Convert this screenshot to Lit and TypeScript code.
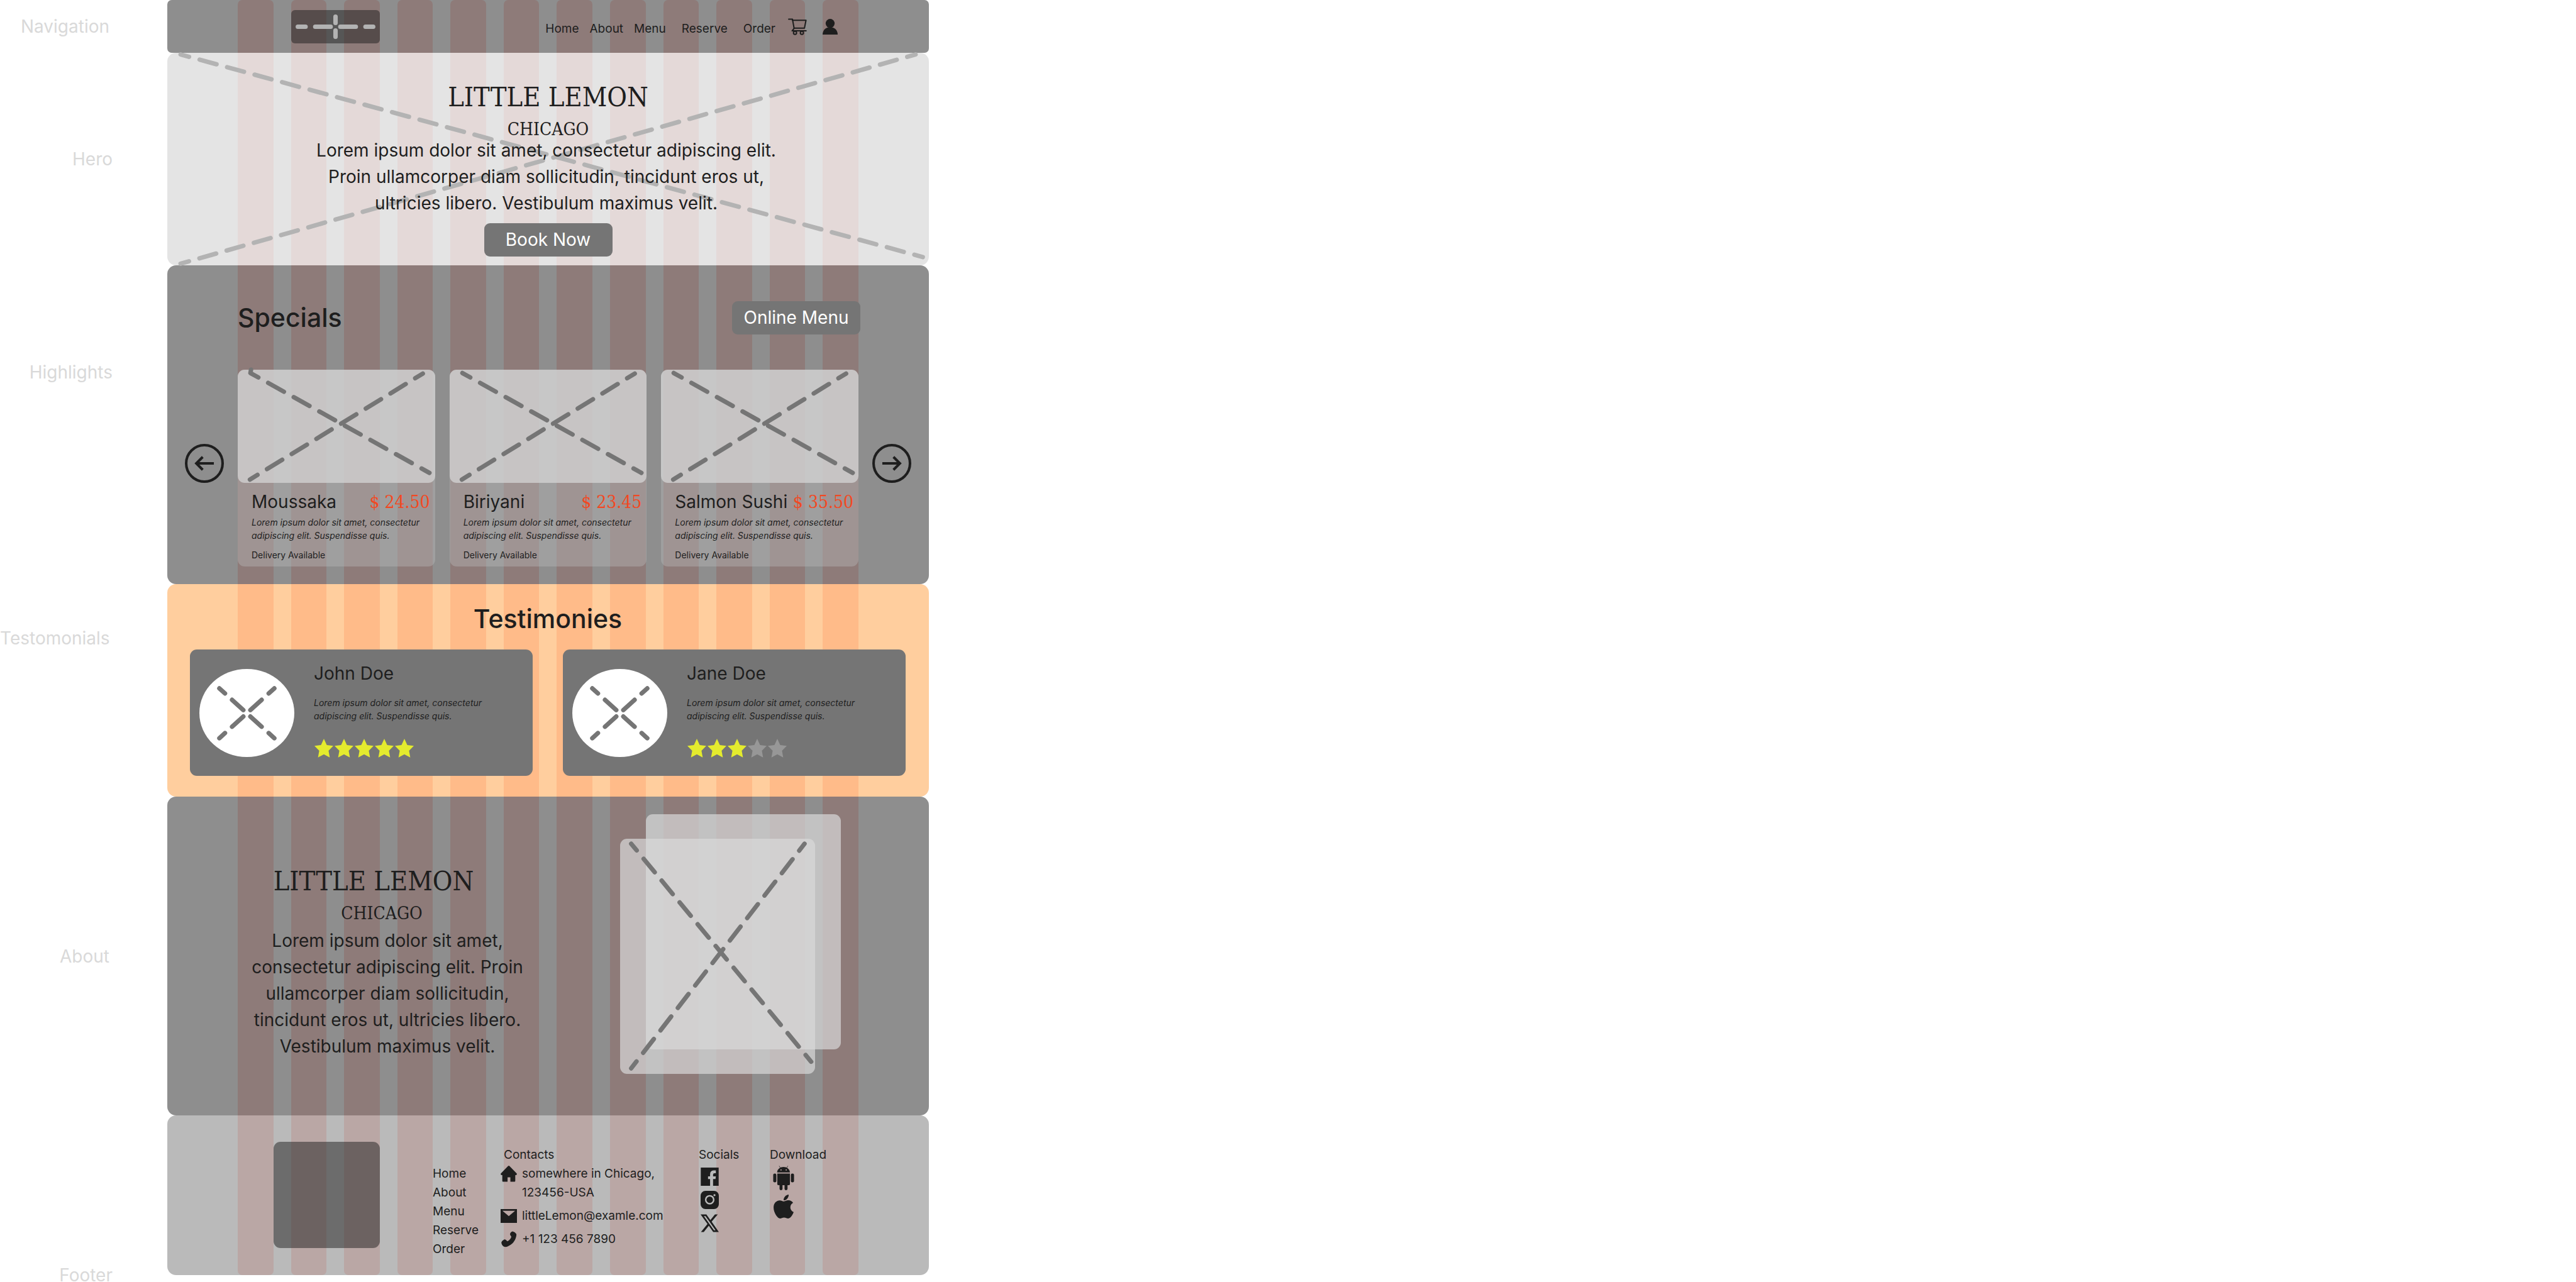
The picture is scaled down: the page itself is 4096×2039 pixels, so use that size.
import { LitElement, html, css, svg } from "lit";
import { customElement, property } from "lit/decorators.js";

type Line = [x1: number, y1: number, x2: number, y2: number, periods: number];

/* A placeholder stroke: dashes spread evenly, with half a dash at each end. */
const dashed = ([x1, y1, x2, y2, periods]: Line) => {
  const period = Math.hypot(x2 - x1, y2 - y1) / periods;
  const dash = (period * 8) / 13;
  return svg`<line x1=${x1} y1=${y1} x2=${x2} y2=${y2}
    stroke-dasharray="${dash} ${period - dash}" stroke-dashoffset=${dash / 2}></line>`;
};

@customElement("dashed-cross")
export class DashedCross extends LitElement {
  @property({ type: Number }) w = 100;
  @property({ type: Number }) h = 100;
  @property({ attribute: false }) lines: Line[] = [];

  static styles = css`
    :host { display: block; }
    .cross {
      display: block; width: 100%; height: 100%; overflow: visible;
      fill: none; stroke: currentColor; stroke-width: 8; stroke-linecap: round;
    }
  `;

  render() {
    return html`<svg class="cross" viewBox="0 0 ${this.w} ${this.h}" preserveAspectRatio="none" aria-hidden="true">
      ${this.lines.map(dashed)}
    </svg>`;
  }
}

const LOGO_LINES: Line[] = [[12, 30, 148, 30, 3], [80, 12, 80, 48, 1]];
const HERO_LINES: Line[] = [[24, 3, 1365, 369, 27], [24, 381, 1352, 3, 27]];
const DISH_LINES: Line[] = [[23, 6, 346, 186, 7], [22, 198, 334, 7, 7]];
const FIRST_DISH_LINES: Line[] = [...DISH_LINES, [24, 0, 23, 5, 0.5]];
const FACE_LINES: Line[] = [[36, 35, 135, 125, 3], [36, 125, 135, 35, 3]];
const ABOUT_LINES: Line[] = [[20, 9, 345, 403, 10], [20, 415, 333, 9, 10]];

const PAGES = ["Home", "About", "Menu", "Reserve", "Order"];
const BLURB = "Lorem ipsum dolor sit amet, consectetur adipiscing elit. Suspendisse quis.";
const STORY =
  "Lorem ipsum dolor sit amet, consectetur adipiscing elit. Proin ullamcorper diam sollicitudin, tincidunt eros ut, ultricies libero. Vestibulum maximus velit.";

const DISHES = [
  { name: "Moussaka", price: "$ 24.50" },
  { name: "Biriyani", price: "$ 23.45" },
  { name: "Salmon Sushi", price: "$ 35.50" },
];

const REVIEWS = [
  { name: "John Doe", stars: 5 },
  { name: "Jane Doe", stars: 3 },
];

const cartIcon = html`<svg class="icon cart" viewBox="0 0 34 30" aria-hidden="true">
  <g fill="none" stroke="currentColor" stroke-width="2.3" stroke-linecap="round" stroke-linejoin="round">
    <path d="M1.2 1.4H8L11 18L7.4 22.4H32.6"></path>
    <path d="M8 3.4H32.4L29.6 17.6H11"></path>
    <circle cx="12.6" cy="26" r="2.8"></circle>
    <circle cx="25" cy="26" r="2.8"></circle>
  </g>
</svg>`;

const userIcon = html`<svg class="icon user" viewBox="0 0 27 28" aria-hidden="true">
  <circle cx="13.5" cy="8" r="8"></circle>
  <path d="M0 28C0 20 6 14.5 13.5 14.5S27 20 27 28Z"></path>
</svg>`;

const arrowIcon = (dir: "left" | "right") => html`<svg class="arrow" viewBox="0 0 70 70" aria-hidden="true">
  <g fill="none" stroke="currentColor" stroke-width="4.6">
    <circle cx="35" cy="35" r="32.7"></circle>
    ${dir === "left"
      ? svg`<path d="M52 35H21M32 23.5L20.5 35L32 46.5"></path>`
      : svg`<path d="M18 35H49M38 23.5L49.5 35L38 46.5"></path>`}
  </g>
</svg>`;

const starIcon = (on: boolean) => html`<svg class="star ${on ? "on" : ""}" viewBox="0 0 34 34" aria-hidden="true">
  <path d="M17 0L22.2 11.2L34 12.8L25.4 21.4L27.6 33.6L17 28L6.4 33.6L8.6 21.4L0 12.8L11.8 11.2Z"></path>
</svg>`;

const homeIcon = html`<svg class="icon line-icon" viewBox="0 0 87 87" aria-hidden="true">
  <path d="M40 1.500Q43.500-1 47 1.500L86 42Q88 50 80 50H78V81Q78 85 74 85H52V62H37V85H13Q9 85 9 81V50H7Q-1 50 1 42Z"></path>
</svg>`;

const mailIcon = html`<svg class="icon line-icon" viewBox="0 -7 87 87" aria-hidden="true">
  <path fill-rule="evenodd" d="M0 0H87V73H0ZM10 9L43.500 37L77 9Z"></path>
</svg>`;

const phoneIcon = html`<svg class="icon line-icon" viewBox="-3 -2 87 87" aria-hidden="true">
  <path d="M61 0Q54 1 49 8Q45 15 49 21L54 27Q52 42 33 52L25 45Q18 40 12 46Q4 50 1 58Q2 72 13 80Q24 85 36 79Q60 70 73 46Q82 27 81 14Q74 3 61 0Z"></path>
</svg>`;

const facebookIcon = html`<svg class="icon social" viewBox="0 0 96 98" aria-hidden="true">
  <path fill-rule="evenodd" d="M0 0H96V98H66V62H79L81 47H66V38Q66 30 74 30H81V15H69Q50 16 50 36V47H39V62H50V98H0Z"></path>
</svg>`;

const instagramIcon = html`<svg class="icon social" viewBox="0 0 96 96" aria-hidden="true">
  <path fill-rule="evenodd" d="M26 0H70A26 26 0 0 1 96 26V70A26 26 0 0 1 70 96H26A26 26 0 0 1 0 70V26A26 26 0 0 1 26 0ZM48 22A25 25 0 1 0 48 72A25 25 0 1 0 48 22ZM73 17A5.500 5.500 0 1 0 73 28A5.500 5.500 0 1 0 73 17Z"></path>
  <circle cx="48" cy="47" r="17"></circle>
</svg>`;

const xIcon = html`<svg class="icon social" viewBox="0 0 24 24" aria-hidden="true">
  <path d="M18.901 0.500h3.680l-8.040 9.500L24 23.500h-7.406l-5.800-8.200-6.638 8.200H.474l8.600-10.500L0 .500h7.594l5.243 7.400ZM17.610 21.300h2.039L6.486 2.600H4.298Z"></path>
</svg>`;

const androidIcon = html`<svg class="icon android" viewBox="0 0 112 132" aria-hidden="true">
  <path d="M32 1L39 13M79 1L72 13" fill="none" stroke="currentColor" stroke-width="2.500"></path>
  <path fill-rule="evenodd" d="M21 36C23 17 38 7 55.500 7S88 17 90 36ZM42 19.500A3.500 3.500 0 1 0 42 26.500A3.500 3.500 0 1 0 42 19.500ZM70 19.500A3.500 3.500 0 1 0 70 26.500A3.500 3.500 0 1 0 70 19.500Z"></path>
  <path d="M22 42H90V99Q90 105 84 105H28Q22 105 22 99Z"></path>
  <rect x="0" y="42" width="17" height="48" rx="8"></rect>
  <rect x="95" y="42" width="17" height="48" rx="8"></rect>
  <rect x="34" y="92" width="16" height="40" rx="8"></rect>
  <rect x="61" y="92" width="16" height="40" rx="8"></rect>
</svg>`;

const appleIcon = html`<svg class="icon apple" viewBox="4 32 376 448" aria-hidden="true">
  <path d="M318.7 268.7c-.2-36.7 16.4-64.4 50-84.8-18.8-26.9-47.2-41.7-84.7-44.6-35.5-2.8-74.3 20.7-88.5 20.7-15 0-49.4-19.7-76.4-19.7C63.3 141.2 4 184.800 4 273.500q0 39.300 14.400 81.200c12.800 36.700 59 126.700 107.200 125.200 25.200-.6 43-17.900 75.800-17.900 31.800 0 48.300 17.900 76.400 17.900 48.600-.7 90.400-82.500 102.600-119.300-65.200-30.700-61.700-90-61.700-91.900zm-56.600-164.200c27.300-32.400 24.800-61.900 24-72.500-24.100 1.400-52 16.400-67.900 34.900-17.500 19.800-27.800 44.300-25.600 71.900 26.100 2 49.900-11.400 69.500-34.300z"></path>
</svg>`;

@customElement("app-root")
export class AppRoot extends LitElement {
  static styles = css`
    :host {
      display: block;
      font-family: Inter, "Liberation Sans", sans-serif;
      font-size: 28px;
      line-height: 42px;
      color: #1e1e1e;
      background: #fff;
    }
    * { box-sizing: border-box; }
    h1, h2, h3, p, ul { margin: 0; padding: 0; font-size: inherit; font-weight: 400; }
    ul { list-style: none; }
    a { color: inherit; text-decoration: none; }
    button { font: inherit; color: inherit; border: 0; padding: 0; background: none; cursor: pointer; }

    .page {
      position: relative;
      display: grid;
      grid-template-columns: 266px minmax(0, 1211px);
      grid-template-rows: 84px 338px 507px 338px 507px 254px;
      padding-bottom: 11px;
      overflow: hidden;
      isolation: isolate;
    }

    .label { grid-column: 1; color: #d9d9d9; line-height: 34px; text-align: right; padding-right: 87px; }
    .label.near { padding-right: 92px; }
    .label.middle { align-self: center; }
    .label.upper { padding-top: 69px; }
    .label.third { padding-top: 153px; }
    .label.foot { align-self: end; line-height: 22px; margin-bottom: -11px; }

    /* The column guides lie under every band of the page. */
    .stripes {
      position: absolute;
      inset: 0;
      grid-column: 2 / 3;
      grid-row: 1 / 7;
      z-index: -1;
      display: grid;
      grid-template-columns: repeat(12, 1fr);
      gap: 28px;
      padding: 0 112px;
    }
    .stripe { background: #ffd9d5; border-radius: 7px; }

    .band { grid-column: 2; border-radius: 14px; }
    .band.nav, .band.specials, .band.about { background: rgba(30, 30, 30, 0.5); }
    .band.nav { border-radius: 7px; }
    .band.hero { background: rgba(217, 217, 217, 0.7); }
    .band.reviews { background: rgba(255, 158, 62, 0.5); }
    .band.footer { background: rgba(117, 117, 117, 0.5); }

    .icon { display: block; fill: currentColor; }

    .nav { display: flex; align-items: center; justify-content: space-between; padding: 0 145px 0 197px; }
    .logo { width: 141px; height: 53px; border-radius: 6px; background: rgba(30, 30, 30, 0.5); color: #b3b3b3; }
    .logo dashed-cross { width: 100%; height: 100%; }
    .tools { display: flex; align-items: center; }
    .pages { display: flex; gap: 17px; padding: 8px 20px 0 0; font-size: 19px; line-height: 30px; }
    .pages .wide { padding-left: 8px; }
    .cart { width: 30px; height: 27px; }
    .user { width: 24px; height: 25px; }
    .icon-button { display: block; margin-left: 25px; }
    .icon-button.first { margin-left: 0; }

    .hero { position: relative; }
    .hero-cross { position: absolute; inset: 0; color: #b3b3b3; }
    .hero-text { position: relative; display: flex; flex-direction: column; align-items: center; padding-top: 42px; }
    .brand { font-family: "DejaVu Serif Condensed", "DejaVu Serif", serif; font-size: 43px; line-height: 56px; }
    .city { font-family: "DejaVu Serif Condensed", "DejaVu Serif", serif; font-size: 28px; line-height: 24px; margin-top: 12px; }
    .story { text-align: center; max-width: 740px; }
    .hero .story { padding-right: 6px; }
    .action {
      width: 204px; height: 53px; border-radius: 9px; background: #757575; color: #fff;
      font-size: 28px; line-height: 53px; text-align: center; white-space: nowrap;
    }
    .hero .action { margin-top: 11px; }

    .specials { display: grid; grid-template-columns: 112px minmax(0, 1fr) 112px; grid-template-rows: 166px auto; }
    .specials-head { grid-column: 2; display: flex; justify-content: space-between; align-items: center; margin-right: -3px; }
    .title { font-size: 41px; line-height: 58px; font-weight: 500; }
    .arrow-button { grid-row: 2; width: 62px; height: 62px; margin: 118px 0 0 28px; }
    .arrow-button.next { margin-left: 22px; }
    .arrow { display: block; width: 62px; height: 62px; }
    .cards { grid-row: 2; grid-column: 2; display: grid; grid-template-columns: repeat(3, 1fr); gap: 23px; align-items: start; }
    .card { border-radius: 11px; background: rgba(179, 179, 179, 0.45); padding-bottom: 8px; }
    .photo { height: 180px; border-radius: 11px; background: rgba(217, 217, 217, 0.7); color: #757575; }
    .photo dashed-cross { height: 100%; }
    .card-head { display: flex; justify-content: space-between; align-items: baseline; margin-top: 9px; padding: 0 8px 0 22px; white-space: nowrap; }
    .price { font-family: "DejaVu Serif Condensed", "DejaVu Serif", serif; color: #f24822; }
    .small { font-size: 14px; line-height: 21px; }
    .blurb { font-style: italic; max-width: 290px; }
    .card .small { margin-left: 22px; }
    .card .delivery { margin-top: 10px; }

    .reviews { padding: 26px 37px 0 36px; }
    .reviews .title { text-align: center; }
    .review-grid { display: grid; grid-template-columns: repeat(2, minmax(0, 1fr)); gap: 48px; margin-top: 20px; }
    .review { display: flex; gap: 31px; min-height: 201px; padding: 0 15px; border-radius: 11px; background: #757575; }
    .face { align-self: center; flex: none; width: 151px; height: 140px; border-radius: 50%; background: #fff; color: #757575; }
    .face dashed-cross { height: 100%; }
    .review-body { padding-top: 17px; }
    .review-body .blurb { margin: 15px 0 26px; }
    .stars { display: flex; gap: 2px; padding-left: 1px; color: #979797; }
    .star { display: block; width: 30px; height: 30px; fill: currentColor; }
    .star.on { color: #e4eb2e; }

    .about { display: flex; justify-content: space-between; align-items: flex-start; padding: 28px 140px 0 130px; }
    .about-text { display: flex; flex-direction: column; align-items: center; width: 440px; padding-top: 78px; }
    .about-text .brand { padding-right: 44px; }
    .about-text .city { padding-right: 18px; }
    .about-text .story { margin-top: 10px; }
    .stack { display: grid; width: 351px; height: 413px; }
    .sheet { grid-area: 1 / 1; width: 310px; height: 374px; border-radius: 11px; background: rgba(217, 217, 217, 0.7); }
    .sheet.back { justify-self: end; }
    .sheet.front { align-self: end; color: #757575; }
    .sheet dashed-cross { height: 100%; }

    .footer {
      display: grid; grid-template-columns: 253px 108px 315px 113px 1fr; align-items: start;
      padding: 42px 0 0 169px; font-size: 19px; line-height: 30px;
    }
    .badge { width: 169px; height: 169px; border-radius: 11px; background: rgba(30, 30, 30, 0.5); }
    .footer-links { padding-top: 36px; }
    .column { padding-top: 6px; }
    .contact-title { padding-left: 5px; }
    .contact-rows { display: grid; gap: 7px; }
    .contact { display: flex; gap: 8px; }
    .line-icon { width: 26px; height: 26px; margin-top: 2px; }
    .icons { display: grid; gap: 8px; padding: 5px 0 0 3px; }
    .icons.apps { gap: 7px; padding: 2px 0 0 5px; }
    .social { width: 29px; height: 29px; }
    .android { width: 34px; height: 39px; }
    .apple { width: 34px; height: 38px; }
  `;

  private navigation() {
    return html`<header class="band nav">
      <div class="logo"><dashed-cross .w=${160} .h=${60} .lines=${LOGO_LINES}></dashed-cross></div>
      <nav class="tools" aria-label="Main">
        <ul class="pages">
          ${PAGES.map((p, i) => html`<li class=${i > 2 ? "wide" : ""}><a href="#${p.toLowerCase()}">${p}</a></li>`)}
        </ul>
        <button class="icon-button first" aria-label="Cart">${cartIcon}</button>
        <button class="icon-button" aria-label="Account">${userIcon}</button>
      </nav>
    </header>`;
  }

  private hero() {
    return html`<section class="band hero" id="home">
      <dashed-cross class="hero-cross" .w=${1376} .h=${384} .lines=${HERO_LINES}></dashed-cross>
      <div class="hero-text">
        <h1 class="brand">LITTLE LEMON</h1>
        <p class="city">CHICAGO</p>
        <p class="story">${STORY}</p>
        <button class="action">Book Now</button>
      </div>
    </section>`;
  }

  private specials() {
    return html`<section class="band specials" id="menu">
      <div class="specials-head">
        <h2 class="title">Specials</h2>
        <button class="action">Online Menu</button>
      </div>
      <button class="arrow-button" aria-label="Previous">${arrowIcon("left")}</button>
      <div class="cards">
        ${DISHES.map(
          (d, i) => html`<article class="card">
            <div class="photo">
              <dashed-cross .w=${356} .h=${204} .lines=${i === 0 ? FIRST_DISH_LINES : DISH_LINES}></dashed-cross>
            </div>
            <div class="card-head">
              <h3 class="name">${d.name}</h3>
              <span class="price">${d.price}</span>
            </div>
            <p class="small blurb">${BLURB}</p>
            <p class="small delivery">Delivery Available</p>
          </article>`
        )}
      </div>
      <button class="arrow-button next" aria-label="Next">${arrowIcon("right")}</button>
    </section>`;
  }

  private reviews() {
    return html`<section class="band reviews">
      <h2 class="title">Testimonies</h2>
      <div class="review-grid">
        ${REVIEWS.map(
          (r) => html`<article class="review">
            <div class="face"><dashed-cross .w=${171} .h=${159} .lines=${FACE_LINES}></dashed-cross></div>
            <div class="review-body">
              <h3 class="name">${r.name}</h3>
              <p class="small blurb">${BLURB}</p>
              <div class="stars" role="img" aria-label="${r.stars} out of 5">
                ${[1, 2, 3, 4, 5].map((n) => starIcon(n <= r.stars))}
              </div>
            </div>
          </article>`
        )}
      </div>
    </section>`;
  }

  private about() {
    return html`<section class="band about" id="about">
      <div class="about-text">
        <h2 class="brand">LITTLE LEMON</h2>
        <p class="city">CHICAGO</p>
        <p class="story">${STORY}</p>
      </div>
      <div class="stack">
        <div class="sheet back"></div>
        <div class="sheet front"><dashed-cross .w=${352} .h=${425} .lines=${ABOUT_LINES}></dashed-cross></div>
      </div>
    </section>`;
  }

  private footer() {
    return html`<footer class="band footer">
      <div class="badge"></div>
      <ul class="footer-links">
        ${PAGES.map((p) => html`<li><a href="#${p.toLowerCase()}">${p}</a></li>`)}
      </ul>
      <div class="column">
        <h3 class="contact-title">Contacts</h3>
        <div class="contact-rows">
          <div class="contact">${homeIcon}<p>somewhere in Chicago,<br />123456-USA</p></div>
          <div class="contact">${mailIcon}<a href="mailto:littleLemon@examle.com">littleLemon@examle.com</a></div>
          <div class="contact">${phoneIcon}<a href="tel:+11234567890">+1 123 456 7890</a></div>
        </div>
      </div>
      <div class="column">
        <h3>Socials</h3>
        <div class="icons">
          <a href="#facebook" aria-label="Facebook">${facebookIcon}</a>
          <a href="#instagram" aria-label="Instagram">${instagramIcon}</a>
          <a href="#x" aria-label="X">${xIcon}</a>
        </div>
      </div>
      <div class="column">
        <h3>Download</h3>
        <div class="icons apps">
          <a href="#android" aria-label="Android">${androidIcon}</a>
          <a href="#apple" aria-label="Apple">${appleIcon}</a>
        </div>
      </div>
    </footer>`;
  }

  render() {
    return html`<main class="page">
      <div class="stripes" aria-hidden="true">${Array.from({ length: 12 }, () => html`<div class="stripe"></div>`)}</div>
      <div class="label near middle">Navigation</div>
      ${this.navigation()}
      <div class="label middle">Hero</div>
      ${this.hero()}
      <div class="label third">Highlights</div>
      ${this.specials()}
      <div class="label near upper">Testomonials</div>
      ${this.reviews()}
      <div class="label near middle">About</div>
      ${this.about()}
      <div class="label foot">Footer</div>
      ${this.footer()}
    </main>`;
  }
}
